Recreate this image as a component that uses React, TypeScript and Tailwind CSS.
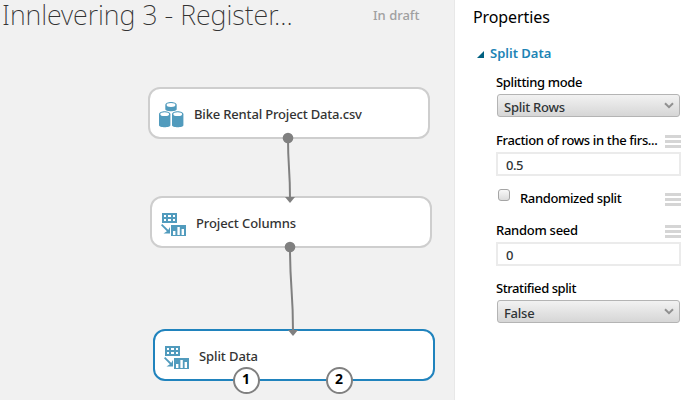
import React from "react";

const sans = "font-['Noto_Sans','Open_Sans',sans-serif]";

function DatasetIcon() {
  const drum = (x: number, y: number, h: number) => (
    <g key={`${x}-${y}`}>
      <path
        d={`M${x} ${y + 3}C${x} ${y - 1} ${x + 11.4} ${y - 1} ${x + 11.4} ${y + 3}V${y + h - 2}C${x + 11.4} ${y + h + 0.6} ${x} ${y + h + 0.6} ${x} ${y + h - 2}Z`}
        fill="#519bbd"
      />
      <ellipse cx={x + 5.7} cy={y + 3} rx="4.4" ry="1.9" fill="#fff" />
    </g>
  );
  return (
    <svg className="mt-[4px] h-[26px] w-[25px] shrink-0" viewBox="0 0 25 26">
      {drum(6.3, 0, 9.2)}
      {drum(0, 9.2, 16)}
      {drum(13, 9.2, 16)}
    </svg>
  );
}

function TransformIcon() {
  return (
    <svg className="mt-[6px] h-[24px] w-[25px] shrink-0" viewBox="0 0 25 24">
      <rect x="1" y="0" width="15" height="10" fill="#519bbd" />
      <path d="M3 2h2v2H3zM7 2h3v2H7zM12 2h2v2h-2zM3 6h2v2H3zM7 6h3v2H7zM12 6h2v2h-2z" fill="#fff" />
      <path d="M0.6 11.6L7.5 18.5" stroke="#519bbd" strokeWidth="1.8" />
      <path d="M9 14V20.5H2.5L5.5 18.6L7.2 17Z" fill="#519bbd" />
      <rect x="10" y="12" width="15" height="11" fill="#519bbd" />
      <path d="M12 18h2.4v4H12zM16.4 14h2.4v8h-2.4zM20.6 16h2.4v6h-2.4z" fill="#fff" />
    </svg>
  );
}

function Menu() {
  return (
    <span className="mt-[4px] flex h-[13px] w-4 shrink-0 flex-col justify-between self-start">
      <span className="h-[3px] bg-[#d5d5d5]" />
      <span className="h-[3px] bg-[#d5d5d5]" />
      <span className="h-[3px] bg-[#d5d5d5]" />
    </span>
  );
}

function Select({ value }: { value: string }) {
  return (
    <div className="ml-px flex h-[23px] w-[183px] items-center justify-between rounded-[3px] border border-[#b4b4b4] bg-linear-to-b from-[#f2f2f2] to-[#d6d6d6] pr-[5px] pl-[6px] text-[#2f3436]">
      <span className="mt-[3px] tracking-[-0.25px]">{value}</span>
      <svg className="h-[7px] w-[10px]" viewBox="0 0 10 7">
        <path d="M1 1.2L5 5.2L9 1.2" fill="none" stroke="#909090" strokeWidth="2" />
      </svg>
    </div>
  );
}

function Input({ value }: { value: string }) {
  return (
    <div className="flex h-6 w-[185px] items-center border-2 border-[#ebebeb] pl-[8px] text-[#2f3436]">
      <span className="mt-[2px] tracking-[-0.5px]">{value}</span>
    </div>
  );
}

function Port({ label, place }: { label: string; place: string }) {
  return (
    <span
      className={`absolute flex size-[27px] items-center justify-center rounded-full border-2 border-[#808080] bg-white pr-px pb-[2px] text-[14px] font-bold text-black ${place}`}
    >
      {label}
    </span>
  );
}

export default function App() {
  return (
    <div className={`flex h-[400px] w-[693px] bg-white text-[13px] leading-[18px] font-medium ${sans}`}>
      <main className="relative w-[455px] shrink-0 border-r border-[#e8e8e8] bg-[#f1f1f1] text-[#333]">
        <header className="flex h-[30px]">
          <h1 className="ml-[2px] w-[371px] whitespace-nowrap text-[27px] leading-[29px] font-extralight tracking-[-0.06px] text-[#333]">
            Innlevering 3 - Register...
          </h1>
          <span className="mt-[6px] whitespace-nowrap text-[#a0a0a0]">In draft</span>
        </header>

        <div className="absolute top-[87px] left-[148px] flex h-[52px] w-[282px] items-center rounded-[12px] border-2 border-[#cecece] bg-white pl-[9px]">
          <DatasetIcon />
          <span className="mt-[2px] ml-[10px] whitespace-nowrap tracking-[-0.17px]">Bike Rental Project Data.csv</span>
        </div>
        <div className="absolute top-[196px] left-[150px] flex h-[52px] w-[282px] items-center rounded-[12px] border-2 border-[#cecece] bg-white pl-[9px]">
          <TransformIcon />
          <span className="mt-[2px] ml-[10px] whitespace-nowrap tracking-[-0.1px]">Project Columns</span>
        </div>
        <div className="absolute top-[329px] left-[153px] flex h-[52px] w-[282px] items-center rounded-[12px] border-2 border-[#2083bd] bg-white pl-[9px]">
          <TransformIcon />
          <span className="mt-[2px] ml-[10px] whitespace-nowrap tracking-[-0.1px]">Split Data</span>
        </div>

        <svg className="absolute top-0 left-0 h-[400px] w-[454px]" viewBox="0 0 454 400">
          <g fill="none" stroke="#808080" strokeWidth="2">
            <path d="M288 138C288 168 290 168 290 198" />
            <path d="M290 247C290 289 293 289 293 331" />
          </g>
          <g fill="#808080">
            <circle cx="288" cy="138" r="5.3" />
            <circle cx="290" cy="247" r="5.3" />
            <path d="M285 197H295L290 203Z" />
            <path d="M288 330H298L293 336Z" />
          </g>
        </svg>
        <Port label="1" place="left-[233px] top-[366.5px]" />
        <Port label="2" place="left-[326px] top-[366.5px]" />
      </main>

      <aside className="w-[238px] pl-[18px] text-black">
        <h2 className="mt-[6px] text-[16px] leading-[22px] font-normal tracking-[-0.1px]">Properties</h2>
        <div className="mt-[16px] flex h-[18px] items-center pl-1 text-[#2083b5]">
          <svg className="mt-[3px] h-[7px] w-[7px]" viewBox="0 0 7 7">
            <path d="M7 0V7H0Z" fill="#006080" />
          </svg>
          <span className="ml-[6px] font-semibold">Split Data</span>
        </div>
        <div className="flex flex-col pl-[23px] tracking-[-0.36px]">
          <span className="mt-[11px]">Splitting mode</span>
          <div className="mt-[3px]"><Select value="Split Rows" /></div>
          <div className="mt-[14px] flex w-[185px] items-center justify-between">
            <span className="whitespace-nowrap">Fraction of rows in the firs...</span>
            <Menu />
          </div>
          <div className="mt-[3px]"><Input value="0.5" /></div>
          <div className="mt-[13px] flex h-[19px] w-[185px] items-center">
            <span className="mb-[7px] ml-[2px] size-[12px] rounded-[3px] border border-[#a5a5a5] bg-linear-to-b from-[#f8f8f8] to-[#dcdcdc]" />
            <span className="mb-px ml-[10px] grow">Randomized split</span>
            <Menu />
          </div>
          <div className="mt-[13px] flex w-[185px] items-center justify-between">
            <span className="tracking-[-0.27px]">Random seed</span>
            <Menu />
          </div>
          <div className="mt-[3px]"><Input value="0" /></div>
          <span className="mt-[13px] tracking-[-0.42px]">Stratified split</span>
          <div className="mt-[3px]"><Select value="False" /></div>
        </div>
      </aside>
    </div>
  );
}
